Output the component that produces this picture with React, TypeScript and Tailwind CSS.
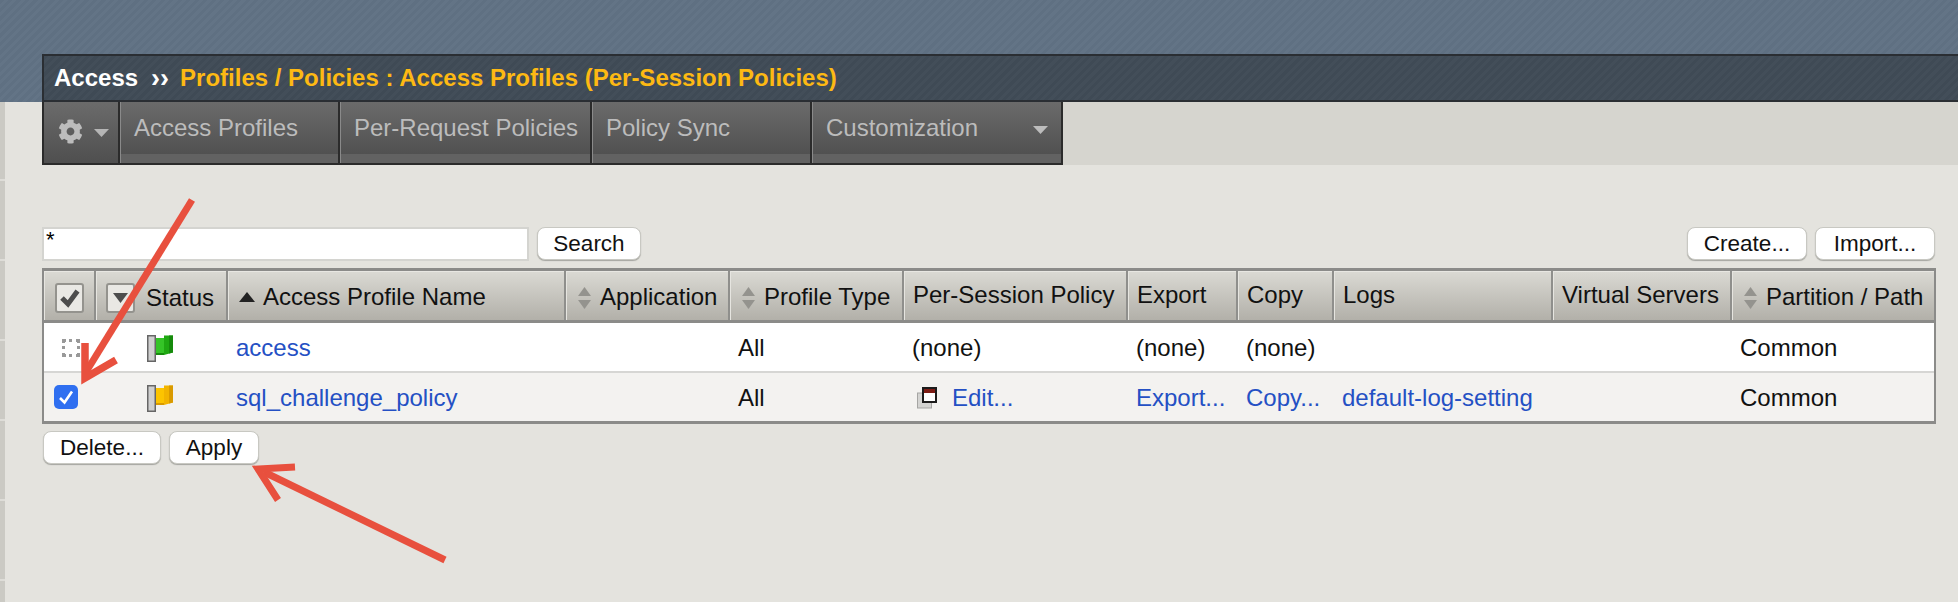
import { FaCog } from "react-icons/fa";

const colWidths = [51, 132, 338, 164, 174, 224, 110, 96, 219, 179, 203];

const SortIcon = () => (
  <svg width="15" height="24" viewBox="0 0 15 24" className="shrink-0 mt-0.5">
    <path d="M7.5 1L14 10H1Z" fill="#94938e" />
    <path d="M7.5 23L14 14H1Z" fill="#94938e" />
  </svg>
);

const Flag = ({ light, mid, dark }: { light: string; mid: string; dark: string }) => (
  <svg width="26" height="27" viewBox="0 0 26 27">
    <rect x="0.75" y="0.75" width="7.5" height="25.5" fill="#cfcfcf" stroke="#666" strokeWidth="1.5" />
    <path d="M9 3H17V20H9Z" fill={light} />
    <path d="M17 0.5H26V17.5L17 20Z" fill={mid} />
    <path d="M22 0.5H26V17.5L22 18.5Z" fill={dark} />
    <path d="M9 20H17V18H9Z" fill={dark} />
  </svg>
);

const EditIcon = () => (
  <svg width="20" height="22" viewBox="0 0 20 22" className="shrink-0">
    <rect x="0.5" y="6" width="14" height="15" fill="#d4d4d2" stroke="#a5a5a3" />
    <rect x="6" y="1" width="13" height="14" fill="#fff" stroke="#1c1c1c" strokeWidth="2" />
    <rect x="7" y="2" width="11" height="4" fill="#7d1d16" />
  </svg>
);

const Btn = ({ label, className }: { label: string; className: string }) => (
  <button className={`h-[33px] pt-[2px] rounded-lg bg-white border border-[#c8c8c2] shadow-[0_1px_1px_#a5a5a0] text-[22.5px] leading-none text-[#111] ${className}`}>
    {label}
  </button>
);

const Tab = ({ label, className }: { label: string; className: string }) => (
  <div className={`h-full border-l border-[#8a8a8a] border-r-2 border-r-[#2b2b2b] flex flex-col ${className}`}>
    <div className="h-[52px] bg-gradient-to-b from-[#6b6b6b] to-[#515151] pl-[13px] pt-[9px] text-[24px] leading-[34px] text-[#bcbcbc] whitespace-nowrap">
      {label}
    </div>
    <div className="h-[9px] bg-[#626262]" />
  </div>
);

const Th = ({ children, sort, bare }: { children?: React.ReactNode; sort?: boolean; bare?: boolean }) => (
  <th className="p-0 font-normal text-left border-l-2 border-[#8f8f8c] first:border-l-0">
    <div className={`h-[49px] flex items-center border-t border-t-[#e8e7e2] border-l border-l-[#e6e5e0] bg-gradient-to-b from-[#dad9d3] to-[#b2b0a9] text-[24px] text-[#111] whitespace-nowrap ${sort ? "gap-[8px] pl-[10px] pt-[2px]" : bare ? "" : "pl-[8px] pb-[3px]"}`}>
      {children}
    </div>
  </th>
);

const Link = ({ children }: { children: React.ReactNode }) => (
  <a className="text-[#2450c4] cursor-pointer">{children}</a>
);

const Td = ({ children, pl = 0 }: { children?: React.ReactNode; pl?: number }) => (
  <td className="p-0 pt-[3px] whitespace-nowrap" style={{ paddingLeft: pl }}>
    {children}
  </td>
);

export default function App() {
  return (
    <div className="relative w-[1958px] h-[602px] overflow-hidden bg-[#e4e3de] font-['Liberation_Sans',Arial,sans-serif]">
      {/* Top band + title */}
      <div className="h-[102px] pt-[54px] pl-[42px] bg-[#607184] bg-[repeating-linear-gradient(135deg,#5f7082_0px,#5f7082_3px,#637486_3px,#637486_6px)]">
        <div className="h-[48px] flex items-center pl-[10px] border-y-2 border-l-2 border-[#2a2e33] bg-[#404b56] bg-[repeating-linear-gradient(135deg,#3f4a55_0px,#3f4a55_3px,#434e59_3px,#434e59_6px)] text-[24px] font-bold whitespace-nowrap">
          <span className="text-white">Access</span>
          <span className="text-white ml-[13px] mr-[11px] text-[27px] leading-none">››</span>
          <span className="text-[#fdb913]">Profiles / Policies : Access Profiles (Per-Session Policies)</span>
        </div>
      </div>

      <div className="flex h-[500px]">
        {/* Left edge of the nav */}
        <div className="w-[5px] bg-[#cbcac4] bg-[repeating-linear-gradient(180deg,#cbcac4_0px,#cbcac4_77px,#dedDd8_77px,#dedDd8_79px,#cbcac4_79px,#cbcac4_80px)]" />

        <div className="flex-1 pl-[37px]">
          {/* Tabs */}
          <div className="h-[63px] bg-[#d6d5cf]">
            <div className="h-[63px] w-[1021px] flex border-b-[2px] border-l-2 border-[#2b2b2b] box-border">
              <div className="w-[76px] h-full border-r-2 border-[#2b2b2b] bg-gradient-to-b from-[#6b6b6b] to-[#4f4f4f] flex items-center pl-[14px] gap-[11px]">
                <FaCog className="text-[#bcbcbc] text-[25px] mt-[-2px]" />
                <svg width="15" height="8" viewBox="0 0 15 8">
                  <path d="M0 0H15L7.5 8Z" fill="#b5b5b5" />
                </svg>
              </div>
              <Tab label="Access Profiles" className="w-[220px]" />
              <Tab label="Per-Request Policies" className="w-[252px]" />
              <Tab label="Policy Sync" className="w-[220px]" />
              <div className="relative flex-1">
                <Tab label="Customization" className="w-full border-r-0" />
                <svg width="15" height="8" viewBox="0 0 15 8" className="absolute right-[15px] top-[24px]">
                  <path d="M0 0H15L7.5 8Z" fill="#bcbcbc" />
                </svg>
              </div>
            </div>
          </div>

          {/* Search row */}
          <div className="mt-[62px] flex items-start w-[1894px]">
            <input
              defaultValue="*"
              className="w-[487px] h-[34px] bg-white border-2 border-[#d4d4d0] px-[2px] pb-[8px] text-[22px] text-black outline-none"
            />
            <Btn label="Search" className="w-[104px] ml-[8px]" />
            <Btn label="Create..." className="w-[120px] ml-auto" />
            <Btn label="Import..." className="w-[120px] ml-[8px] mr-[1px]" />
          </div>

          {/* Profiles table */}
          <div className="mt-[7px] w-[1894px] border-x-2 border-t-[3px] border-b-[3px] border-[#8b8b89]">
            <table className="w-full table-fixed border-collapse text-[24px] text-[#111]">
              <colgroup>
                {colWidths.map((w, i) => (
                  <col key={i} style={{ width: w }} />
                ))}
              </colgroup>
              <thead>
                <tr className="border-b-[3px] border-[#8b8b89]">
                  <Th bare>
                    <div className="ml-[10px] mt-[3px] w-[29px] h-[30px] flex items-center justify-center rounded-[3px] border-2 border-[#94938e] bg-[#e9e8e4]">
                      <svg width="20" height="20" viewBox="0 0 20 20">
                        <path d="M2 10L8 16L17.5 3" fill="none" stroke="#4d4d4d" strokeWidth="5" />
                      </svg>
                    </div>
                  </Th>
                  <Th bare>
                    <div className="ml-[9px] mt-[3px] w-[29px] h-[30px] flex items-center justify-center rounded-[3px] border-2 border-[#94938e] bg-[#e9e8e4]">
                      <svg width="15" height="10" viewBox="0 0 15 10">
                        <path d="M0 0H15L7.5 10Z" fill="#4d4d4d" />
                      </svg>
                    </div>
                    <span className="ml-[11px] pt-[3px]">Status</span>
                  </Th>
                  <Th sort>
                    <svg width="16" height="10" viewBox="0 0 16 10" className="shrink-0">
                      <path d="M8 0L16 10H0Z" fill="#222" />
                    </svg>
                    Access Profile Name
                  </Th>
                  <Th sort>
                    <SortIcon />
                    Application
                  </Th>
                  <Th sort>
                    <SortIcon />
                    Profile Type
                  </Th>
                  <Th>Per-Session Policy</Th>
                  <Th>Export</Th>
                  <Th>Copy</Th>
                  <Th>Logs</Th>
                  <Th>Virtual Servers</Th>
                  <Th sort>
                    <SortIcon />
                    Partition / Path
                  </Th>
                </tr>
              </thead>
              <tbody>
                <tr className="h-[50px] bg-white border-b-2 border-[#d6d6d4]">
                  <Td pl={18}>
                    <div className="w-[18px] h-[18px] border-[3px] border-dotted border-[#999]" />
                  </Td>
                  <Td pl={52}>
                    <Flag light="#35c427" mid="#1fa812" dark="#168a0c" />
                  </Td>
                  <Td pl={9}>
                    <Link>access</Link>
                  </Td>
                  <Td />
                  <Td pl={9}>All</Td>
                  <Td pl={9}>(none)</Td>
                  <Td pl={9}>(none)</Td>
                  <Td pl={9}>(none)</Td>
                  <Td />
                  <Td />
                  <Td pl={9}>Common</Td>
                </tr>
                <tr className="h-[49px] bg-[#f3f2f0]">
                  <Td pl={10}>
                    <div className="w-[24px] h-[24px] rounded-[5px] bg-[#2f6ff0] flex items-center justify-center mb-[2px]">
                      <svg width="16" height="16" viewBox="0 0 16 16">
                        <path d="M2 9L6.5 13.5L14 2.5" fill="none" stroke="#fff" strokeWidth="2.6" />
                      </svg>
                    </div>
                  </Td>
                  <Td pl={52}>
                    <Flag light="#fcc400" mid="#f2b400" dark="#d99a00" />
                  </Td>
                  <Td pl={9}>
                    <Link>sql_challenge_policy</Link>
                  </Td>
                  <Td />
                  <Td pl={9}>All</Td>
                  <Td pl={14}>
                    <div className="flex items-center gap-[15px]">
                      <EditIcon />
                      <Link>Edit...</Link>
                    </div>
                  </Td>
                  <Td pl={9}>
                    <Link>Export...</Link>
                  </Td>
                  <Td pl={9}>
                    <Link>Copy...</Link>
                  </Td>
                  <Td pl={9}>
                    <Link>default-log-setting</Link>
                  </Td>
                  <Td />
                  <Td pl={9}>Common</Td>
                </tr>
              </tbody>
            </table>
          </div>

          {/* Bottom buttons */}
          <div className="mt-[7px] flex gap-[8px] pl-[1px]">
            <Btn label="Delete..." className="w-[118px]" />
            <Btn label="Apply" className="w-[90px]" />
          </div>
        </div>
      </div>

      {/* Red annotation arrows */}
      <svg width="1958" height="602" viewBox="0 0 1958 602" className="absolute inset-0 pointer-events-none">
        <g fill="none" stroke="#e8503e" strokeWidth="7">
          <path d="M192 200L86 372" />
          <path d="M85 343V378L116 360" strokeWidth="7.5" />
          <path d="M445 560L264 472" />
          <path d="M295 467L258 469L278 500" />
        </g>
      </svg>
    </div>
  );
}
